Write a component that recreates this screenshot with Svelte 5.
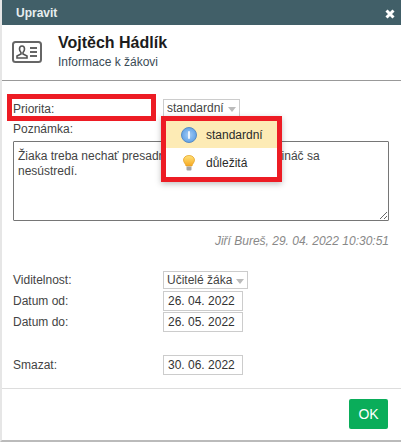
<script>
  const rows = [
    { label: 'Datum od:', value: '26. 04. 2022' },
    { label: 'Datum do:', value: '26. 05. 2022' }
  ];
  const note = 'Žiaka treba nechať presadnúť do prednej lavičky, ináč sa\nnesústredí.';
</script>

<div class="dialog">
  <div class="titlebar">
    <span>Upravit</span>
    <svg class="close" width="10" height="10" viewBox="0 0 10 10">
      <path d="M1.5 1.5 L8.5 8.5 M8.5 1.5 L1.5 8.5" stroke="#fff" stroke-width="3" />
    </svg>
  </div>

  <div class="head">
    <svg class="card" width="30" height="22" viewBox="0 0 30 22" fill="none">
      <rect x="1" y="1" width="28" height="20" rx="2.500" stroke="#666" stroke-width="2" />
      <path d="M5 17 v-2 l4-2 v-1.500 c-1-1-1.500-2-1.500-3.500 c0-2 1-3 2.500-3 s2.500 1 2.500 3 c0 1.500-.5 2.500-1.500 3.500 v1.500 l4 2 v2 z" stroke="#555" stroke-width="1.600" />
      <path d="M18 7 h7 M18 11 h7 M18 15 h7" stroke="#666" stroke-width="2.200" />
    </svg>
    <div>
      <h1>Vojtěch Hádlík</h1>
      <p>Informace k žákovi</p>
    </div>
  </div>

  <div class="body">
    <div class="row first">
      <label for="prio">Priorita:</label>
      <div class="select" id="prio">standardní<i></i></div>
    </div>
    <div class="note-label">Poznámka:</div>
    <textarea readonly value={note}></textarea>
    <div class="sign">Jiří Bureš, 29. 04. 2022 10:30:51</div>

    <div class="row vis">
      <label for="vis">Viditelnost:</label>
      <div class="select" id="vis">Učitelé žáka<i></i></div>
    </div>
    {#each rows as r}
      <div class="row date">
        <span class="lbl">{r.label}</span>
        <div class="input">{r.value}</div>
      </div>
    {/each}
    <div class="row date del">
      <span class="lbl">Smazat:</span>
      <div class="input">30. 06. 2022</div>
    </div>
  </div>

  <div class="foot">
    <button type="button">OK</button>
  </div>

  <div class="mark mark-label"></div>
  <div class="menu">
    <div class="opt on">
      <svg width="18" height="18" viewBox="0 0 18 18">
        <defs>
          <radialGradient id="blue" cx="50%" cy="50%" r="55%">
            <stop offset="0" stop-color="#a6cdf5" />
            <stop offset="1" stop-color="#5c9fe6" />
          </radialGradient>
          <linearGradient id="bulb" x1="0" y1="0" x2="0" y2="1">
            <stop offset="0" stop-color="#ffe27a" />
            <stop offset="1" stop-color="#f6a821" />
          </linearGradient>
        </defs>
        <circle cx="9" cy="9" r="7.500" fill="url(#blue)" stroke="#5a8cc2" />
        <rect x="8" y="5" width="2" height="8" rx="1" fill="#eef5fd" />
      </svg>
      standardní
    </div>
    <div class="opt second">
      <svg width="18" height="18" viewBox="0 0 18 18">
        <path d="M9 1.500 c3.300 0 5.500 2 5.500 4.500 c0 2.500-2 3.500-2.500 6 h-6 c-.5-2.500-2.500-3.500-2.500-6 c0-2.500 2.200-4.500 5.500-4.500 z" fill="url(#bulb)" stroke="#e39c1c" stroke-width=".7" />
        <rect x="6.500" y="12.500" width="5" height="4" rx="1" fill="#a4a4a4" />
      </svg>
      důležitá
    </div>
  </div>
</div>

<style>
  :global(body) {
    margin: 0;
    background: #fff;
  }
  .dialog {
    position: relative;
    width: 401px;
    height: 442px;
    box-sizing: border-box;
    display: flex;
    flex-direction: column;
    font-family: "Liberation Sans", Arial, sans-serif;
    font-size: 12px;
    color: #444;
    background: #fff;
    border-left: 2px solid #e6e6e6;
    border-bottom: 2px solid #bbb;
    overflow: hidden;
  }
  .titlebar {
    height: 25px;
    margin-left: -2px;
    padding: 0 6px 0 16px;
    background: #415f68;
    color: #e8eeef;
    font-weight: bold;
    display: flex;
    align-items: center;
    justify-content: space-between;
  }
  .close { margin-top: 3px; }
  .head {
    height: 56px;
    box-sizing: border-box;
    border-bottom: 1px solid #999;
    display: flex;
    gap: 16px;
    padding: 0 0 0 10px;
    align-items: flex-start;
  }
  .card { margin-top: 16px; }
  h1 {
    margin: 9px 0 0;
    font-size: 16px;
    line-height: 18px;
    font-weight: bold;
    color: #1c1c1c;
  }
  .head p {
    margin: 3px 0 0;
    font-size: 12px;
    line-height: 14px;
    color: #3a4a55;
  }
  .body {
    flex: 1;
    padding: 18px 12px 0 11px;
  }
  .row {
    display: flex;
    align-items: center;
  }
  .row label, .lbl {
    width: 150px;
    flex: none;
  }
  .select {
    height: 19px;
    box-sizing: border-box;
    border: 1px solid #ccc;
    padding: 0 3px;
    line-height: 17px;
    display: flex;
    align-items: center;
    gap: 4px;
  }
  .select i {
    width: 0;
    height: 0;
    margin-top: 2px;
    border: 4px solid transparent;
    border-top: 5px solid #bbb;
    border-bottom: 0;
  }
  .note-label {
    margin-top: 4px;
    line-height: 14px;
    height: 19px;
  }
  textarea {
    display: block;
    width: 376px;
    height: 80px;
    box-sizing: border-box;
    margin: 0;
    padding: 7px 4px;
    border: 1px solid #767676;
    border-radius: 1px;
    font: 12px/15px "Liberation Sans", Arial, sans-serif;
    color: #444;
    outline: none;
  }
  .sign {
    width: 376px;
    margin-top: 13px;
    line-height: 14px;
    font-style: italic;
    text-align: right;
    color: #888;
  }
  .vis { margin-top: 23px; }
  .vis .select { height: 18px; }
  .date { margin-top: 2px; }
  .date + .date { margin-top: 1px; }
  .date + .date.del { margin-top: 23px; }
  .input {
    width: 80px;
    height: 20px;
    box-sizing: border-box;
    border: 1px solid #ccc;
    padding: 0 4px;
    line-height: 18px;
    color: #333;
  }
  .foot {
    height: 52px;
    border-top: 1px solid #ddd;
    box-sizing: border-box;
    display: flex;
    justify-content: flex-end;
    padding: 10px 13px 0 0;
  }
  button {
    width: 39px;
    height: 30px;
    border: 0;
    border-radius: 2px;
    padding: 0;
    background: #0aad5a;
    color: #fff;
    font: 14px "Liberation Sans", Arial, sans-serif;
  }
  .mark {
    position: absolute;
    border: 5px solid #ed1c24;
    box-sizing: border-box;
  }
  .mark-label {
    left: 5px;
    top: 94px;
    width: 149px;
    height: 27px;
  }
  .menu {
    position: absolute;
    left: 159px;
    top: 116px;
    width: 121px;
    height: 66px;
    box-sizing: border-box;
    border: 5px solid #ed1c24;
    background: #fff;
    box-shadow: 0 2px 6px rgba(0, 0, 0, 0.25);
    color: #2a2a2a;
  }
  .opt {
    height: 27px;
    padding-left: 14px;
    display: flex;
    align-items: center;
    gap: 8px;
  }
  .second { height: 29px; }
  .on { background: #fdebb5; }
</style>
